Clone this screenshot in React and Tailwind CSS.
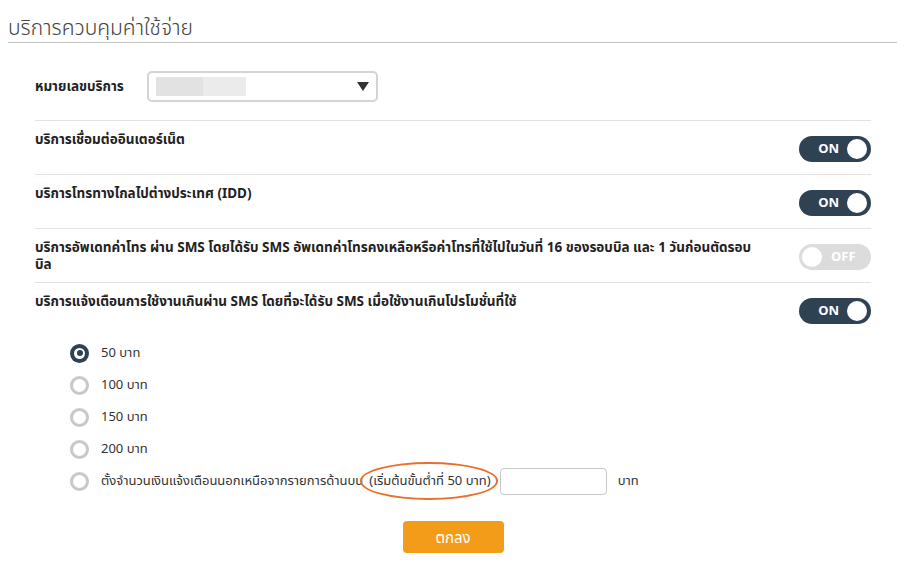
import React, {useState} from 'react';

const font = {fontFamily: 'Tahoma, "Noto Sans", "Noto Sans Thai", "DejaVu Sans", sans-serif'};

const Toggle = ({on, onClick}) => {
    if (on) {
        return (
            <button onClick={onClick}
                    className="w-[72px] h-[26px] rounded-full bg-[#2f4254] flex items-center justify-end pr-[4px] gap-[8px] shrink-0">
                <span className="text-white text-[13px] font-bold">ON</span>
                <span className="w-[20px] h-[20px] rounded-full bg-white"/>
            </button>
        );
    }
    return (
        <button onClick={onClick}
                className="w-[72px] h-[26px] rounded-full bg-[#dcdcdc] flex items-center pl-[3px] gap-[9px] shrink-0">
            <span className="w-[20px] h-[20px] rounded-full bg-white"/>
            <span className="text-white text-[13px] font-bold">OFF</span>
        </button>
    );
};

const Radio = ({checked, onClick, children}) => (
    <div className="flex items-center h-[32px] cursor-pointer" onClick={onClick}>
        <span className={`w-[19px] h-[19px] rounded-full flex items-center justify-center shrink-0 ${checked ? 'bg-[#2f4254]' : 'border-[3px] border-[#c8c8c8] bg-white'}`}>
            {checked && (
                <span className="w-[11px] h-[11px] rounded-full bg-white flex items-center justify-center">
                    <span className="w-[6px] h-[6px] rounded-full bg-[#2f4254]"/>
                </span>
            )}
        </span>
        <div className="ml-[12px] text-[13px] text-[#333] flex items-center">{children}</div>
    </div>
);

export default function App() {
    const [toggles, setToggles] = useState([true, true, false, true]);
    const [amount, setAmount] = useState(0);
    const [custom, setCustom] = useState('');

    const flip = (i) => setToggles(toggles.map((t, j) => (j === i ? !t : t)));

    const rows = [
        'บริการเชื่อมต่ออินเตอร์เน็ต',
        'บริการโทรทางไกลไปต่างประเทศ (IDD)',
        'บริการอัพเดทค่าโทร ผ่าน SMS โดยได้รับ SMS อัพเดทค่าโทรคงเหลือหรือค่าโทรที่ใช้ไปในวันที่ 16 ของรอบบิล และ 1 วันก่อนตัดรอบบิล',
    ];

    return (
        <div className="w-[905px] h-[571px] bg-white px-[8px] pt-[13px]" style={font}>
            <h1 className="text-[21px] leading-[28px] text-[#444] font-light border-b border-[#c4c4c4] pb-[1px]">
                บริการควบคุมค่าใช้จ่าย
            </h1>
            <div className="pl-[27px] pr-[26px]">
                {/* หมายเลขบริการ */}
                <div className="flex items-center h-[78px] border-b border-[#e2e2e2] pt-[9px]">
                    <span className="text-[13.5px] font-bold text-[#222] w-[112px]">หมายเลขบริการ</span>
                    <div className="w-[231px] h-[31px] border-2 border-[#d4d4d4] rounded-[5px] flex items-center justify-between px-[7px]">
                        <div className="flex h-[19px]">
                            <div className="w-[47px] bg-[#e2e2e2]"/>
                            <div className="w-[43px] bg-[#ebebeb]"/>
                        </div>
                        <svg width="12" height="9" viewBox="0 0 12 9">
                            <polygon points="0,0 12,0 6,9" fill="#333"/>
                        </svg>
                    </div>
                </div>

                {rows.map((text, i) => (
                    <div key={i} className="flex justify-between border-b border-[#e2e2e2] h-[54px] pt-[10px]">
                        <p className={`text-[13.5px] font-bold text-[#222] leading-[17px] ${i === 2 ? 'w-[722px]' : ''}`}>{text}</p>
                        <div className="pt-[5px] pl-[20px]">
                            <Toggle on={toggles[i]} onClick={() => flip(i)}/>
                        </div>
                    </div>
                ))}

                <div className="flex justify-between pt-[10px]">
                    <p className="text-[13.5px] font-bold text-[#222] leading-[17px]">
                        บริการแจ้งเตือนการใช้งานเกินผ่าน SMS โดยที่จะได้รับ SMS เมื่อใช้งานเกินโปรโมชั่นที่ใช้
                    </p>
                    <div className="pt-[5px]">
                        <Toggle on={toggles[3]} onClick={() => flip(3)}/>
                    </div>
                </div>

                <div className="pl-[35px] pt-[13px]">
                    {['50 บาท', '100 บาท', '150 บาท', '200 บาท'].map((label, i) => (
                        <Radio key={i} checked={amount === i} onClick={() => setAmount(i)}>{label}</Radio>
                    ))}
                    <Radio checked={amount === 4} onClick={() => setAmount(4)}>
                        <span>ตั้งจำนวนเงินแจ้งเตือนนอกเหนือจากรายการด้านบน</span>
                        <span className="relative ml-[6px]">
                            (เริ่มต้นขั้นต่ำที่ 50 บาท)
                            <span className="absolute left-[-9px] right-[-7px] top-[-9px] bottom-[-9px] rounded-[50%] border-2 border-[#e8702c]"/>
                        </span>
                        <input type="text" value={custom} onChange={(e) => setCustom(e.target.value)}
                               className="ml-[9px] w-[107px] h-[27px] border border-[#c8c8c8] rounded-[4px] px-2 outline-none"/>
                        <span className="ml-[11px]">บาท</span>
                    </Radio>
                </div>

                <div className="flex justify-center pt-[24px]">
                    <button className="w-[101px] h-[32px] bg-[#f39c1a] rounded-[4px] text-white text-[15px]">
                        ตกลง
                    </button>
                </div>
            </div>
        </div>
    );
}
